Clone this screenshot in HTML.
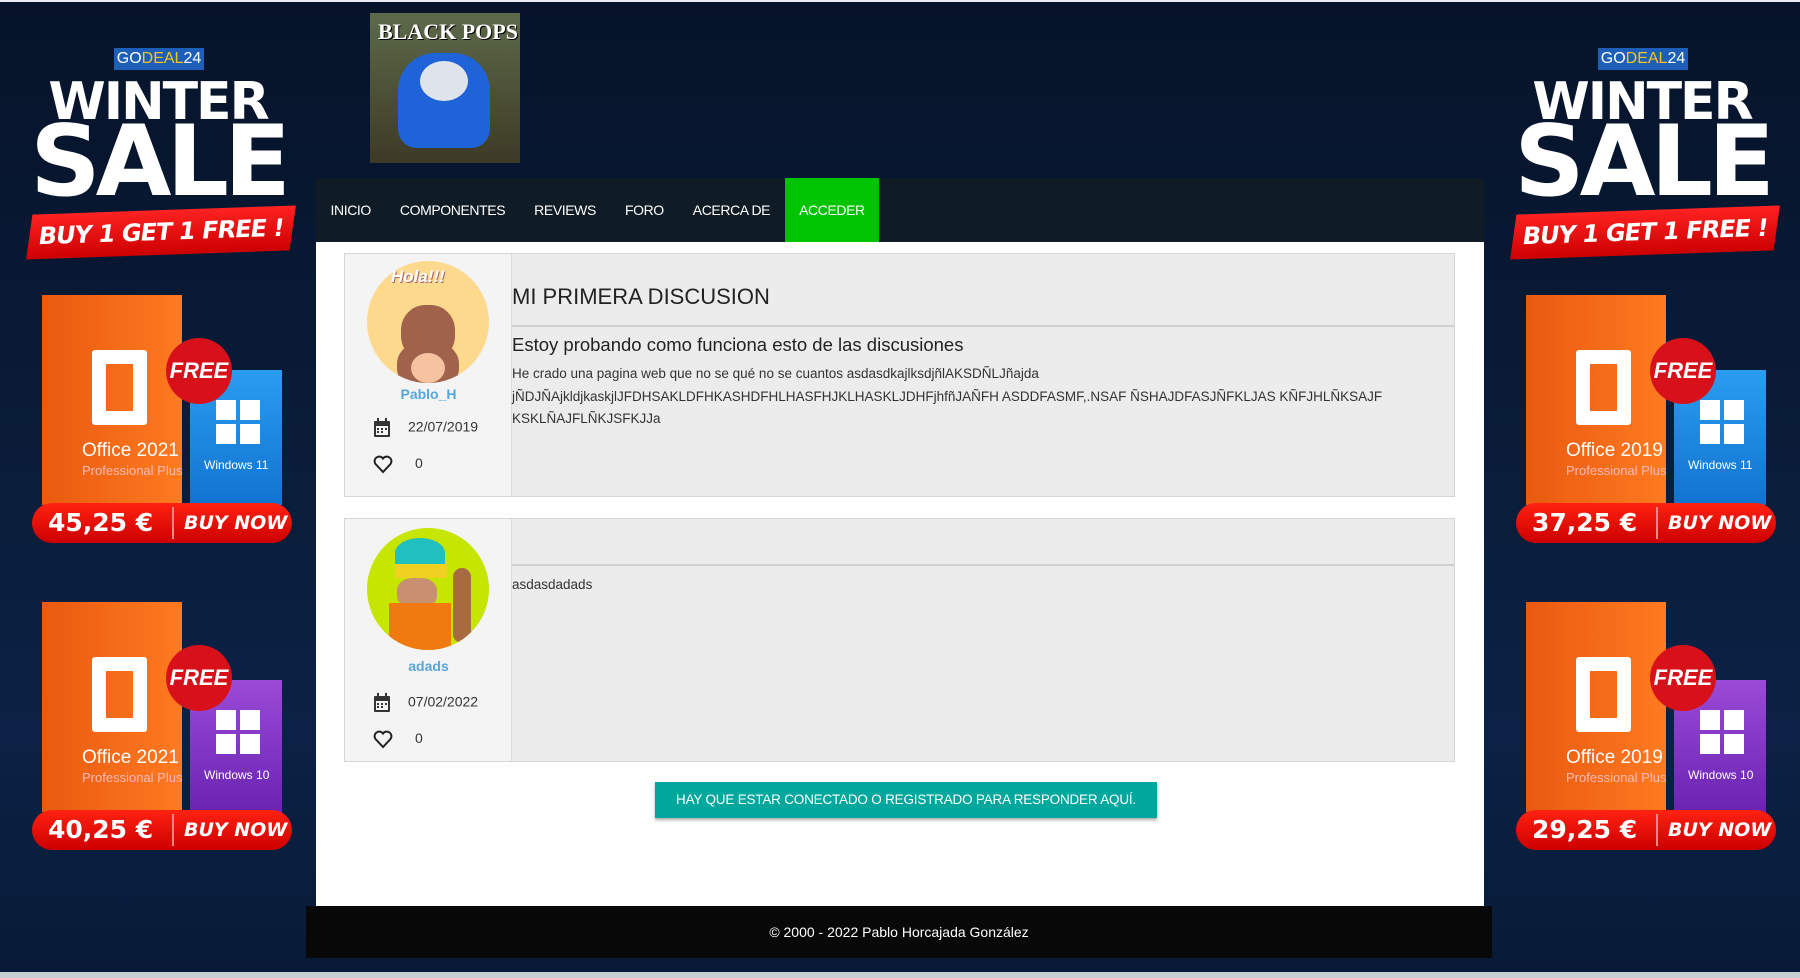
<!DOCTYPE html>
<html><head><meta charset="utf-8">
<style>
*{margin:0;padding:0;box-sizing:border-box}
body{width:1800px;height:978px;overflow:hidden;background:#071630;font-family:"Liberation Sans",sans-serif;position:relative}
.bg{position:absolute;inset:0;background:linear-gradient(#06132a 0%,#0a1d3a 50%,#0b2246 75%,#081a36 100%)}
.topline{position:absolute;left:0;top:0;width:1800px;height:2px;background:#e8ecf0}
.botline{position:absolute;left:0;top:972px;width:1800px;height:6px;background:#c9ced3}
.ad{position:absolute;top:0;width:316px;height:978px}
.ad .g{position:absolute;left:114px;top:48px;width:90px;height:22px;background:#1d5fb8;color:#fff;font-size:16px;text-align:center;line-height:22px}
.ad .g b{color:#f5c518;font-weight:normal}
.ad .w{position:absolute;left:0;width:316px;text-align:center;color:#fff;font-weight:bold;font-family:"DejaVu Sans",sans-serif}
.ad .w1{top:72px;font-size:52px;letter-spacing:-2px}
.ad .w2{top:112px;font-size:98px;letter-spacing:-5px;line-height:100px}
.ad .rib{position:absolute;left:30px;top:210px;width:262px;height:45px;background:linear-gradient(#f22,#c00);transform:skewX(-10deg) rotate(-2deg);color:#fff;font-weight:bold;font-size:24px;text-align:center;line-height:45px;font-family:"DejaVu Sans",sans-serif;letter-spacing:-1px}
.box{position:absolute;left:42px;width:140px;height:210px;background:linear-gradient(90deg,#e85a10,#ff7a20);}
.box .o{position:absolute;left:50px;top:55px;width:55px;height:75px;border:14px solid #fff;border-radius:3px}
.box .t{position:absolute;left:40px;top:145px;color:#fff;font-size:19px;white-space:nowrap}
.box .p{position:absolute;left:40px;top:168px;color:#fbb;font-size:13px;white-space:nowrap}
.win{position:absolute;left:190px;width:92px;height:135px;background:linear-gradient(#2a9df0,#1173d0)}
.win.p{background:linear-gradient(#9a4bd8,#6a22b0)}
.win .q{position:absolute;left:26px;top:30px;width:44px;height:44px;background:
linear-gradient(#fff,#fff) 0 0/20px 20px no-repeat,linear-gradient(#fff,#fff) 24px 0/20px 20px no-repeat,linear-gradient(#fff,#fff) 0 24px/20px 20px no-repeat,linear-gradient(#fff,#fff) 24px 24px/20px 20px no-repeat}
.win span{position:absolute;left:14px;top:88px;color:#fff;font-size:12px;white-space:nowrap}
.free{position:absolute;left:166px;width:66px;height:66px;border-radius:50%;background:#d8101a;color:#fff;font-weight:bold;font-style:italic;font-size:22px;text-align:center;line-height:66px}
.price{position:absolute;left:32px;width:260px;height:40px;border-radius:20px;background:linear-gradient(#f21,#c00);color:#fff;font-weight:bold;font-family:"DejaVu Sans",sans-serif}
.price i{position:absolute;left:16px;top:5px;font-style:normal;font-size:25px}
.price s{position:absolute;left:140px;text-decoration:none;font-size:19px;font-style:italic;border-left:2px solid #f88;padding-left:10px;top:4px;line-height:32px}
.logo{position:absolute;left:370px;top:13px;width:150px;height:150px;background:linear-gradient(#5d6a4a,#3d3a25);overflow:hidden}
.logo .t{position:absolute;left:8px;top:6px;color:#fff;font-family:"Liberation Serif",serif;font-weight:bold;font-size:22px;text-shadow:1px 1px #000}
.logo .bird{position:absolute;left:28px;top:40px;width:92px;height:95px;background:#1f63d8;border-radius:40% 40% 20% 20%}
.logo .face{position:absolute;left:50px;top:48px;width:48px;height:40px;background:#dfe3ea;border-radius:50%}
.nav{position:absolute;left:316px;top:178px;width:1168px;height:64px;background:#0f1c25}
.nav a{float:left;color:#fff;font-size:14px;letter-spacing:-.4px;line-height:64px;padding:0 14.5px}
.nav a.act{background:#00c400}
.main{position:absolute;left:316px;top:242px;width:1168px;height:664px;background:#fff}
.post{position:absolute;left:344px;width:1111px;border:1px solid #d6d6d6;background:#ececec}
.post .l{position:absolute;left:0;top:0;bottom:0;width:167px;background:#f4f4f4;border-right:1px solid #dcdcdc}
.av{position:absolute;left:22px;width:122px;height:122px;border-radius:50%;overflow:hidden}
.name{position:absolute;left:0;width:167px;text-align:center;color:#55a7dc;font-size:14px;font-weight:bold}
.meta{position:absolute;left:28px;font-size:14px;color:#333}
.meta svg{vertical-align:middle;margin-right:17px}
.h1{position:absolute;left:167px;font-size:22px;color:#222}
.sep{position:absolute;left:167px;right:0;height:2px;background:#d0d0d0}
.sub{position:absolute;left:167px;font-size:18.5px;color:#222}
.txt{position:absolute;left:167px;font-size:13.5px;color:#333;line-height:22.5px;width:930px}
.btn{position:absolute;left:655px;top:782px;width:502px;height:36px;background:#00a79d;color:#fff;font-size:13.5px;letter-spacing:-.2px;text-align:center;line-height:36px;box-shadow:0 2px 3px rgba(0,0,0,.35)}
.foot{position:absolute;left:306px;top:906px;width:1186px;height:52px;background:#080808;color:#fff;font-size:14px;text-align:center;line-height:52px}
</style></head><body>
<div class="bg"></div>
<div class="topline"></div>

<div class="ad" style="left:0">
<div class="g">GO<b>DEAL</b>24</div>
<div class="w w1">WINTER</div><div class="w w2">SALE</div>
<div class="rib">BUY 1 GET 1 FREE !</div>
<div class="box" style="top:295px"><div class="o"></div><div class="t">Office 2021</div><div class="p">Professional Plus</div></div>
<div class="win" style="top:370px"><div class="q"></div><span>Windows 11</span></div>
<div class="free" style="top:338px">FREE</div>
<div class="price" style="top:503px"><i>45,25 €</i><s>BUY NOW</s></div>
<div class="box" style="top:602px"><div class="o"></div><div class="t">Office 2021</div><div class="p">Professional Plus</div></div>
<div class="win p" style="top:680px"><div class="q"></div><span>Windows 10</span></div>
<div class="free" style="top:645px">FREE</div>
<div class="price" style="top:810px"><i>40,25 €</i><s>BUY NOW</s></div>
</div>

<div class="ad" style="left:1484px">
<div class="g">GO<b>DEAL</b>24</div>
<div class="w w1">WINTER</div><div class="w w2">SALE</div>
<div class="rib">BUY 1 GET 1 FREE !</div>
<div class="box" style="top:295px"><div class="o"></div><div class="t">Office 2019</div><div class="p">Professional Plus</div></div>
<div class="win" style="top:370px"><div class="q"></div><span>Windows 11</span></div>
<div class="free" style="top:338px">FREE</div>
<div class="price" style="top:503px"><i>37,25 €</i><s>BUY NOW</s></div>
<div class="box" style="top:602px"><div class="o"></div><div class="t">Office 2019</div><div class="p">Professional Plus</div></div>
<div class="win p" style="top:680px"><div class="q"></div><span>Windows 10</span></div>
<div class="free" style="top:645px">FREE</div>
<div class="price" style="top:810px"><i>29,25 €</i><s>BUY NOW</s></div>
</div>

<div class="logo"><div class="bird"></div><div class="face"></div><div class="t">BLACK POPS</div></div>

<div class="nav"><a>INICIO</a><a>COMPONENTES</a><a>REVIEWS</a><a>FORO</a><a>ACERCA DE</a><a class="act">ACCEDER</a></div>
<div class="main"></div>

<div class="post" style="top:253px;height:244px">
<div class="l">
<div class="av" style="top:7px;background:#fdd98e">
<div style="position:absolute;left:24px;top:6px;color:#fff;font-weight:bold;font-style:italic;font-size:17px;text-shadow:1px 1px #a66">Hola!!!</div>
<div style="position:absolute;left:34px;top:44px;width:54px;height:56px;background:#a0624a;border-radius:45%"></div>
<div style="position:absolute;left:30px;top:80px;width:62px;height:50px;background:#a0624a;border-radius:45%"></div>
<div style="position:absolute;left:44px;top:92px;width:34px;height:30px;background:#f6c2a0;border-radius:50%"></div>
</div>
<div class="name" style="top:132px">Pablo_H</div>
<div class="meta" style="top:164px"><svg width="18" height="20" viewBox="0 0 18 20"><rect x="1" y="3" width="16" height="16" rx="1" fill="#333"/><rect x="3" y="8" width="12" height="9" fill="#f4f4f4"/><rect x="4" y="0" width="2" height="5" fill="#333"/><rect x="12" y="0" width="2" height="5" fill="#333"/><g fill="#333"><rect x="4" y="10" width="2" height="2"/><rect x="8" y="10" width="2" height="2"/><rect x="12" y="10" width="2" height="2"/><rect x="4" y="13" width="2" height="2"/><rect x="8" y="13" width="2" height="2"/></g></svg>22/07/2019</div>
<div class="meta" style="top:200px"><svg width="20" height="20" viewBox="0 0 20 20"><path d="M10 18 L2.5 10 A4.5 4.5 0 0 1 10 4.5 A4.5 4.5 0 0 1 17.5 10 Z" fill="none" stroke="#222" stroke-width="2"/></svg><span style="margin-left:5px">0</span></div>
</div>
<div class="h1" style="top:30px">MI PRIMERA DISCUSION</div>
<div class="sep" style="top:71px"></div>
<div class="sub" style="top:80px">Estoy probando como funciona esto de las discusiones</div>
<div class="txt" style="top:109px">He crado una pagina web que no se qué no se cuantos asdasdkajlksdjñlAKSDÑLJñajda jÑDJÑAjkldjkaskjlJFDHSAKLDFHKASHDFHLHASFHJKLHASKLJDHFjhfñJAÑFH ASDDFASMF,.NSAF ÑSHAJDFASJÑFKLJAS KÑFJHLÑKSAJF KSKLÑAJFLÑKJSFKJJa</div>
</div>

<div class="post" style="top:518px;height:244px">
<div class="l">
<div class="av" style="top:9px;background:#c6e600">
<div style="position:absolute;left:28px;top:10px;width:50px;height:30px;background:#20c0c0;border-radius:50% 50% 0 0"></div>
<div style="position:absolute;left:28px;top:36px;width:52px;height:14px;background:#f0d020"></div>
<div style="position:absolute;left:30px;top:50px;width:40px;height:30px;background:#c89070;border-radius:40%"></div>
<div style="position:absolute;left:22px;top:75px;width:62px;height:50px;background:#f07a10"></div>
<div style="position:absolute;left:86px;top:40px;width:18px;height:75px;background:#a86a40;border-radius:9px"></div>
</div>
<div class="name" style="top:139px">adads</div>
<div class="meta" style="top:174px"><svg width="18" height="20" viewBox="0 0 18 20"><rect x="1" y="3" width="16" height="16" rx="1" fill="#333"/><rect x="3" y="8" width="12" height="9" fill="#f4f4f4"/><rect x="4" y="0" width="2" height="5" fill="#333"/><rect x="12" y="0" width="2" height="5" fill="#333"/><g fill="#333"><rect x="4" y="10" width="2" height="2"/><rect x="8" y="10" width="2" height="2"/><rect x="12" y="10" width="2" height="2"/><rect x="4" y="13" width="2" height="2"/><rect x="8" y="13" width="2" height="2"/></g></svg>07/02/2022</div>
<div class="meta" style="top:210px"><svg width="20" height="20" viewBox="0 0 20 20"><path d="M10 18 L2.5 10 A4.5 4.5 0 0 1 10 4.5 A4.5 4.5 0 0 1 17.5 10 Z" fill="none" stroke="#222" stroke-width="2"/></svg><span style="margin-left:5px">0</span></div>
</div>
<div class="sep" style="top:45px"></div>
<div class="txt" style="top:55px">asdasdadads</div>
</div>

<div class="btn">HAY QUE ESTAR CONECTADO O REGISTRADO PARA RESPONDER AQUÍ.</div>
<div class="foot">© 2000 - 2022 Pablo Horcajada González</div>
<div class="botline"></div>
</body></html>
